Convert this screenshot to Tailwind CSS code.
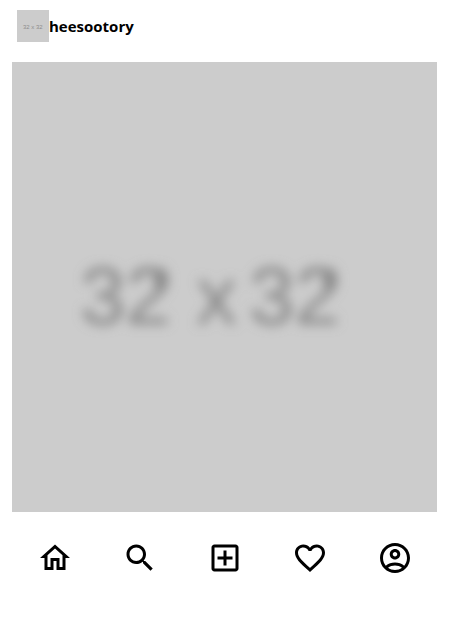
<!DOCTYPE html>
<html lang="en">
<head>
<meta charset="utf-8">
<meta name="viewport" content="width=device-width, initial-scale=1">
<title>heesootory</title>
<script src="https://cdn.jsdelivr.net/npm/@tailwindcss/browser@4"></script>
</head>
<body class="bg-white text-black font-['Open_Sans','Noto_Sans',sans-serif]">
<main class="pl-3 pr-9">
  <header class="flex items-center px-[5px] pt-[10px] pb-5">
    <svg class="size-8 shrink-0 bg-[#ccc]" viewBox="0 0 32 32" role="img" aria-label="Profile photo">
      <text x="6" y="19" font-size="6" fill="#8c8c8c" font-family="Liberation Sans, Arial, sans-serif">32 x 32</text>
    </svg>
    <a href="#profile" class="text-[15px] leading-6 font-bold">heesootory</a>
  </header>
  <svg class="block h-[450px] w-full bg-[#ccc]" viewBox="0 0 425 450" role="img" aria-label="Post photo">
    <defs>
      <filter id="soft" x="-10%" y="-30%" width="120%" height="160%"><feGaussianBlur stdDeviation="6"/></filter>
    </defs>
    <g filter="url(#soft)" fill="#868686">
      <text y="262" font-size="82" font-family="Liberation Sans, Arial, sans-serif"><tspan x="68">32</tspan> <tspan x="184">x</tspan> <tspan x="237">32</tspan></text>
      <ellipse cx="149" cy="218" rx="7" ry="12"/>
      <ellipse cx="318" cy="218" rx="7" ry="12"/>
    </g>
  </svg>
  <nav class="grid grid-cols-5 justify-items-center pt-7" aria-label="Main">
    <a href="#home" aria-label="Home"><svg class="size-9" viewBox="0 0 24 24"><path d="m12 5.69 5 4.5V18h-2v-6H9v6H7v-7.81l5-4.5M12 3 2 12h3v8h6v-6h2v6h6v-8h3L12 3z"/></svg></a>
    <a href="#search" aria-label="Search"><svg class="size-9" viewBox="0 0 24 24"><path d="M15.5 14h-.79l-.28-.27C15.41 12.59 16 11.11 16 9.5 16 5.91 13.09 3 9.5 3S3 5.91 3 9.5 5.91 16 9.5 16c1.61 0 3.09-.59 4.23-1.57l.27.28v.79l5 4.99L20.49 19l-4.99-5zm-6 0C7.01 14 5 11.99 5 9.5S7.01 5 9.5 5 14 7.01 14 9.5 11.99 14 9.5 14z"/></svg></a>
    <a href="#new" aria-label="New post"><svg class="size-9" viewBox="0 0 24 24"><path d="M19 3H5c-1.11 0-2 .9-2 2v14c0 1.1.89 2 2 2h14c1.1 0 2-.9 2-2V5c0-1.1-.9-2-2-2zm0 16H5V5h14v14zm-8-2h2v-4h4v-2h-4V7h-2v4H7v2h4z"/></svg></a>
    <a href="#likes" aria-label="Likes"><svg class="size-9" viewBox="0 0 24 24"><path d="M16.5 3c-1.74 0-3.41.81-4.5 2.09C10.91 3.81 9.24 3 7.5 3 4.42 3 2 5.42 2 8.5c0 3.78 3.4 6.86 8.55 11.54L12 21.35l1.45-1.32C18.6 15.36 22 12.28 22 8.5 22 5.42 19.58 3 16.5 3zm-4.4 15.55-.1.1-.1-.1C7.14 14.24 4 11.39 4 8.5 4 6.5 5.5 5 7.5 5c1.54 0 3.04.99 3.57 2.36h1.87C13.46 5.99 14.96 5 16.5 5c2 0 3.5 1.5 3.5 3.5 0 2.89-3.14 5.74-7.9 10.05z"/></svg></a>
    <a href="#account" aria-label="Account"><svg class="size-9" viewBox="0 0 24 24"><path fill-rule="evenodd" d="M12 2C6.48 2 2 6.48 2 12s4.48 10 10 10 10-4.48 10-10S17.52 2 12 2zM7.35 18.5C8.66 17.56 10.26 17 12 17s3.34.56 4.65 1.5C15.34 19.44 13.74 20 12 20s-3.34-.56-4.65-1.5zm10.79-1.38C16.45 15.8 14.32 15 12 15s-4.45.8-6.14 2.12C4.7 15.73 4 13.95 4 12c0-4.42 3.58-8 8-8s8 3.58 8 8c0 1.95-.7 3.73-1.86 5.12zM12 6c-1.93 0-3.5 1.57-3.5 3.5S10.07 13 12 13s3.5-1.57 3.5-3.5S13.93 6 12 6zm0 5c-.83 0-1.5-.67-1.5-1.5S11.17 8 12 8s1.5.67 1.5 1.5S12.83 11 12 11z"/></svg></a>
  </nav>
</main>
</body>
</html>
